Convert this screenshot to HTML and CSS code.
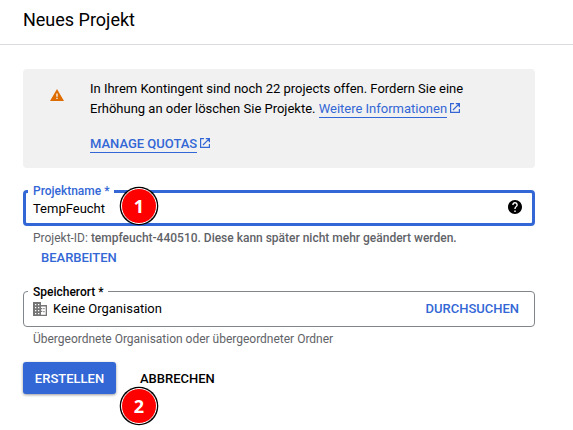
FILE: index.html
```html
<!DOCTYPE html>
<html lang="de">
<head>
<meta charset="utf-8">
<title>Neues Projekt</title>
<link rel="stylesheet" href="styles.css">
</head>
<body>
<header class="header"><h1>Neues Projekt</h1></header>
<main class="content">
  <section class="notice">
    <svg class="warning" viewBox="0 0 14 12"><path fill="#df6c00" d="M7 0 14 12H0z"/><path fill="#f1f1f1" d="M6.3 4.5h1.4v3.3H6.3zM6.3 8.7h1.4v1.4H6.3z"/></svg>
    <div class="notice-text">
      <p>In Ihrem Kontingent sind noch 22 projects offen. Fordern Sie eine<br>Erhöhung an oder löschen Sie Projekte. <a class="link" href="#">Weitere Informationen</a><svg class="external" viewBox="0 0 10 10"><path d="M4 .6H.6v8.8h8.8V6M5.8.6h3.6v3.6M9.4.6 3 7"/></svg></p>
      <p class="quota"><a class="link" href="#">MANAGE QUOTAS</a><svg class="external" viewBox="0 0 10 10"><path d="M4 .6H.6v8.8h8.8V6M5.8.6h3.6v3.6M9.4.6 3 7"/></svg></p>
    </div>
  </section>

  <fieldset class="field focused">
    <legend>Projektname *</legend>
    <div class="row">
      <span class="value">TempFeucht</span>
      <svg class="help" viewBox="2 2 20 20"><path d="M12 2C6.48 2 2 6.48 2 12s4.48 10 10 10 10-4.48 10-10S17.52 2 12 2zm1 17h-2v-2h2v2zm2.07-7.75-.9.92C13.45 12.9 13 13.5 13 15h-2v-.5c0-1.1.45-2.1 1.17-2.83l1.24-1.26c.37-.36.59-.86.59-1.41 0-1.1-.9-2-2-2s-2 .9-2 2H8c0-2.21 1.79-4 4-4s4 1.79 4 4c0 .88-.36 1.68-.93 2.25z"/></svg>
    </div>
    <span class="badge">1</span>
  </fieldset>
  <p class="hint">Projekt-ID: <b>tempfeucht-440510. Diese kann später nicht mehr geändert werden.</b></p>
  <a class="action edit" href="#">BEARBEITEN</a>

  <fieldset class="field location">
    <legend>Speicherort *</legend>
    <div class="row">
      <svg class="org" viewBox="0 0 14 14"><path fill-rule="evenodd" d="M0 0h8v3h6v11H0zM2 2v1.2h1.3V2zM5 2v1.2h1.3V2zM2 5v1.2h1.3V5zM5 5v1.2h1.3V5zM2 8v1.2h1.3V8zM5 8v1.2h1.3V8zM2 11v1.2h1.3V11zM5 11v1.2h1.3V11zM8 4.5V6h1.3v1.3H8v1.5h1.3v1.3H8v2.6h4.7V4.5zM10.3 6h1.3v1.3h-1.3zM10.3 9h1.3v1.3h-1.3z"/></svg>
      <span class="value">Keine Organisation</span>
      <a class="action browse" href="#">DURCHSUCHEN</a>
    </div>
  </fieldset>
  <p class="hint">Übergeordnete Organisation oder übergeordneter Ordner</p>

  <div class="buttons">
    <button class="primary">ERSTELLEN</button>
    <button class="cancel">ABBRECHEN</button>
    <span class="badge">2</span>
  </div>
</main>
</body>
</html>
```

FILE: styles.css
```css
* { box-sizing: border-box; }
body {
  margin: 0;
  min-height: 430px;
  background: #fff;
  color: #000;
  font: 13px/20px Roboto, sans-serif;
  letter-spacing: -.007px;
}
h1, p { margin: 0; }
a { color: #3367d6; text-decoration: none; }
.header { height: 45px; padding: 8px 23px; border-bottom: 1px solid #dadce0; }
h1 { font-size: 18px; font-weight: 400; line-height: 24px; }
.content { width: 512px; height: 361px; margin: 24px 0 0 23px; }
.notice {
  display: flex;
  height: 99px;
  padding: 10px 27px;
  background: #f1f1f1;
  border-radius: 4px;
}
.warning { width: 14px; height: 12px; margin: 10px 26px 0 0; }
.notice-text { white-space: nowrap; }
.link { border-bottom: 1px solid #3367d6; padding-bottom: 1px; }
.quota { margin-top: 15px; font-weight: 500; }
.external {
  width: 10px;
  height: 10px;
  margin-left: 3px;
  fill: none;
  stroke: #3367d6;
  stroke-width: 1.2;
}
.field {
  position: relative;
  height: 42px;
  min-width: 0;
  margin: 15px 0 0;
  padding: 0 15px 0 2px;
  border: 1px solid #80868b;
  border-radius: 4px;
}
.field legend {
  height: 14px;
  margin-left: 2px;
  padding: 0 4px 0 5px;
  font-size: 12px;
  font-weight: 500;
  line-height: 14px;
}
.focused { margin-top: 16px; padding: 0 10px 0 0; border: 3px solid #3367d6; }
.focused legend { color: #3367d6; }
.row { display: flex; align-items: center; height: 22px; padding-left: 7px; }
.help { width: 14px; height: 14px; margin-left: auto; margin-top: -4px; }
.org { width: 14px; height: 14px; margin-right: 6px; fill: #757575; }
.hint { margin: 3px 0 0 10px; color: #5f6368; font-size: 12px; line-height: 18px; white-space: nowrap; }
.hint b { font-weight: 500; }
.action { font-weight: 500; }
.edit { display: block; margin: 1px 0 0 18px; }
.browse { margin-left: auto; }
.location { margin-top: 16px; height: 43px; }
.location legend { line-height: 16px; }
.buttons { position: relative; display: flex; margin-top: 14px; }
button { height: 32px; padding: 1px 0 0; border: 0; border-radius: 3px; font: 500 13px/20px Roboto, sans-serif; }
.primary {
  width: 93px;
  color: #fff;
  background: #3367d6;
  box-shadow: 0 1px 3px rgba(0, 0, 0, .4);
}
.cancel { margin-left: 24px; background: none; color: #000; }
.badge {
  position: absolute;
  left: 98px;
  top: 26px;
  width: 36px;
  height: 36px;
  border: 1px solid #fff;
  border-radius: 50%;
  background: #f00;
  box-shadow: 0 0 0 1.3px #000;
  color: #fff;
  font: 700 18px/34px "Open Sans", sans-serif;
  text-align: center;
}
.focused .badge { left: 95px; top: -10px; }
```
